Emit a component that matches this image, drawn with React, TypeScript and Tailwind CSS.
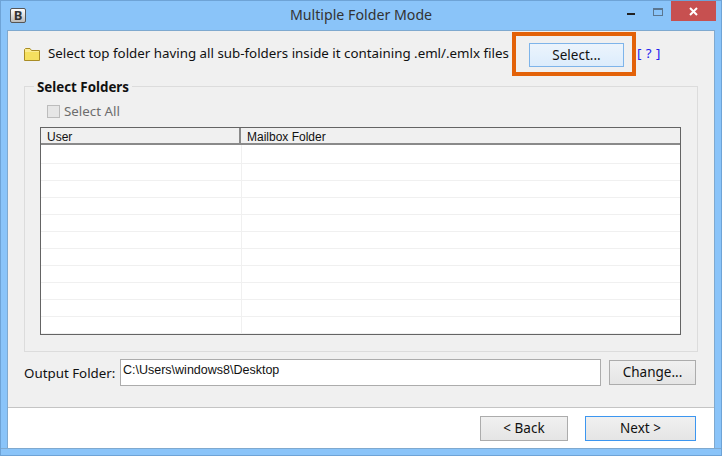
const font = { fontFamily: '"Noto Sans", sans-serif' };
const narrow = { fontFamily: '"Liberation Sans", sans-serif' };

const rows = Array.from({ length: 11 });

function FolderIcon() {
  return (
    <svg width="16" height="13" viewBox="0 0 16 13" className="shrink-0">
      <path d="M0.5 12.5V1.5L1.5 0.5H6L7.5 2.5H15.5V12.5Z" fill="#fbeb8f" stroke="#a98c25" />
      <path d="M1 4H15V12H1Z" fill="#f5e05f" />
    </svg>
  );
}

function WinButton({ children, className }: { children: React.ReactNode; className: string }) {
  return (
    <button className={'h-[25px] flex items-center justify-center border text-[13.5px] text-[#111] bg-gradient-to-b shrink-0 ' + className}>
      {children}
    </button>
  );
}

export default function App() {
  return (
    <div className="w-[722px] h-[456px] bg-[#8ac4f9] border border-[#6ea3d6] flex flex-col overflow-hidden text-[13.33px] text-[#111]" style={font}>
      {/* Title bar */}
      <div className="h-[29px] shrink-0 flex items-start relative">
        <div className="ml-[9px] mt-[7px] w-[16px] h-[15px] rounded-[2px] border border-[#555] bg-gradient-to-b from-white to-[#bbb] flex items-center justify-center text-[13px] font-bold leading-none text-[#333]">B</div>
        <div className="absolute left-0 right-0 top-[4px] text-center text-[14.2px] leading-[20px] text-[#333]">Multiple Folder Mode</div>
        <div className="ml-auto flex items-start mr-[5px]">
          <div className="w-[8px] h-[2px] bg-[#222] mt-[12px] mr-[18px]"></div>
          <div className="w-[10px] h-[8px] border border-[#5b7690] border-t-2 mt-[7px] mr-[8px]"></div>
          <div className="w-[45px] h-[20px] bg-[#c75050] flex items-center justify-center">
            <svg width="9" height="9" viewBox="0 0 9 9"><path d="M1 1L8 8M8 1L1 8" stroke="#fff" strokeWidth="2" /></svg>
          </div>
        </div>
      </div>

      {/* Client area */}
      <div className="mx-[6px] border border-[#7fa9cf] border-b-0 flex-1 flex flex-col bg-[#f0f0f0] min-h-0">
        <div className="flex-1 px-[16px] flex flex-col">
          <div className="h-[55px] shrink-0 flex items-center pb-[9px]">
            <FolderIcon />
            <span className="ml-[8px] w-[464px] whitespace-nowrap">Select top folder having all sub-folders inside it containing .eml/.emlx files</span>
            <div className="w-[124px] h-[44px] border-[4px] border-[#e36209] flex items-start pl-[13px] pt-[7px] shrink-0">
              <WinButton className="w-[95px] !h-[24px] border-[#7eb4ea] from-[#ecf4fc] to-[#dcecfc]">Select...</WinButton>
            </div>
            <span className="ml-[1px] text-[#2222ee] whitespace-nowrap tracking-[0.5px]">[ ? ]</span>
          </div>

          {/* Select Folders group */}
          <div className="relative border border-[#dcdcdc] h-[266px] pl-[15px] pr-[16px] pt-[18px] flex flex-col shrink-0">
            <span className="absolute left-[9px] top-[-8px] bg-[#f0f0f0] px-[3px] font-bold leading-[16px]">Select Folders</span>
            <div className="ml-[7px] flex items-center gap-[4px] text-[#6d6d6d] h-[13px]">
              <div className="w-[13px] h-[13px] border border-[#bcbcbc] bg-[#e6e6e6]"></div>
              <span>Select All</span>
            </div>
            <div className="mt-[9px] h-[208px] border border-[#646464] bg-white flex flex-col overflow-hidden">
              <div className="h-[17px] shrink-0 flex bg-[#f0f0f0] border-b-2 border-[#8a8a8a] text-[12px] leading-[18px] text-[#111]" style={narrow}>
                <div className="w-[200px] pl-[6px] border-r-2 border-[#8a8a8a]">User</div>
                <div className="pl-[6px]">Mailbox Folder</div>
              </div>
              {rows.map((_, i) => (
                <div key={i} className={(i === 0 ? 'h-[19px]' : 'h-[17px]') + ' shrink-0 flex border-b border-[#f0f0f0]'}>
                  <div className="w-[201px] border-r border-[#f0f0f0]"></div>
                </div>
              ))}
            </div>
          </div>

          {/* Output folder */}
          <div className="mt-[7px] flex items-start">
            <span className="w-[96px] leading-[29px] whitespace-nowrap">Output Folder:</span>
            <div className="w-[481px] h-[27px] border border-[#acacac] bg-white px-[2px] text-[12.5px] leading-[20px]" style={narrow}>C:\Users\windows8\Desktop</div>
            <WinButton className="ml-[8px] mt-[1px] w-[87px] border-[#acacac] from-[#f0f0f0] to-[#e5e5e5]">Change...</WinButton>
          </div>
        </div>

        {/* Footer */}
        <div className="h-[41px] shrink-0 bg-white border-t border-[#c4c4c4] flex items-center justify-end pr-[18px] gap-[17px]">
          <WinButton className="w-[88px] border-[#acacac] from-[#f0f0f0] to-[#e5e5e5]">&lt; Back</WinButton>
          <WinButton className="w-[111px] border-[#3c96f0] from-[#f0f0f0] to-[#e5e5e5]">Next &gt;</WinButton>
        </div>
      </div>
      <div className="h-[7px] shrink-0 border-t border-[#7fa9cf]"></div>
    </div>
  );
}
